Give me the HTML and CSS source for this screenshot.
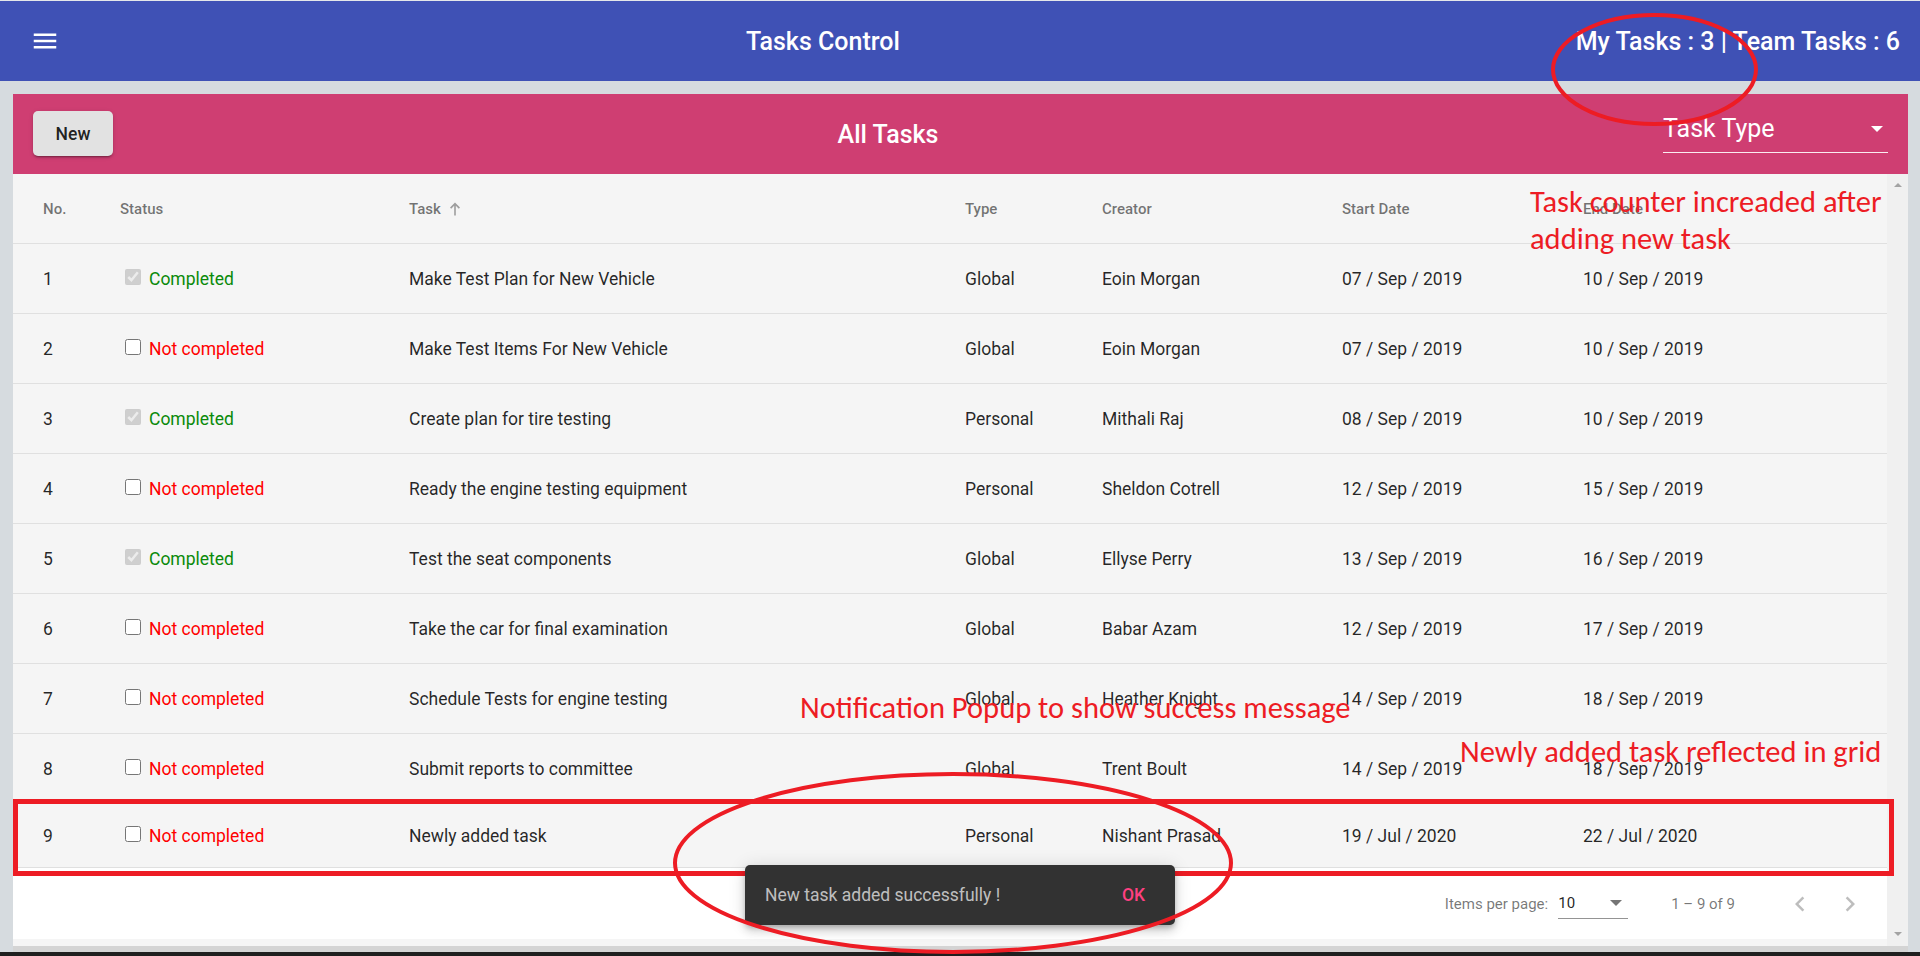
FILE: index.html
```html
<!DOCTYPE html>
<html lang="en">
<head>
<meta charset="utf-8">
<title>Tasks Control</title>
<link rel="stylesheet" href="styles.css">
</head>
<body>
<div class="page">
  <header class="app-bar">
    <span class="menu-btn">
      <svg viewBox="0 0 24 24"><path d="M3 18h18v-2H3v2zm0-5h18v-2H3v2zm0-7v2h18V6H3z"/></svg>
    </span>
    <span class="spacer"></span>
    <span class="app-title">Tasks Control</span>
    <span class="spacer"></span>
    <span class="counter">My Tasks : 3 | Team Tasks : 6</span>
  </header>

  <main class="content">
    <section class="card">
      <div class="card-bar">
        <button class="new-btn">New</button>
        <span class="spacer"></span>
        <span class="card-title">All Tasks</span>
        <span class="spacer"></span>
        <div class="type-select">
          <span>Task Type</span>
          <span class="arrow-white"></span>
        </div>
      </div>

      <div class="scroll">
        <div class="scroll-body">
          <div class="grid head">
            <span>No.</span>
            <span>Status</span>
            <span class="sort">Task
              <svg class="sort-arrow" viewBox="0 0 12 14"><path d="M6 0.5 L1 5.5 L2.2 6.7 L5.2 3.7 L5.2 13.5 L6.8 13.5 L6.8 3.7 L9.8 6.7 L11 5.5 Z"/></svg>
            </span>
            <span>Type</span>
            <span>Creator</span>
            <span>Start Date</span>
            <span>End Date</span>
          </div>

          <div class="grid row">
            <span>1</span>
            <span><input type="checkbox" class="cb" checked disabled><span class="done">Completed</span></span>
            <span>Make Test Plan for New Vehicle</span>
            <span>Global</span>
            <span>Eoin Morgan</span>
            <span>07 / Sep / 2019</span>
            <span>10 / Sep / 2019</span>
          </div>
          <div class="grid row">
            <span>2</span>
            <span><input type="checkbox" class="cb"><span class="todo">Not completed</span></span>
            <span>Make Test Items For New Vehicle</span>
            <span>Global</span>
            <span>Eoin Morgan</span>
            <span>07 / Sep / 2019</span>
            <span>10 / Sep / 2019</span>
          </div>
          <div class="grid row">
            <span>3</span>
            <span><input type="checkbox" class="cb" checked disabled><span class="done">Completed</span></span>
            <span>Create plan for tire testing</span>
            <span>Personal</span>
            <span>Mithali Raj</span>
            <span>08 / Sep / 2019</span>
            <span>10 / Sep / 2019</span>
          </div>
          <div class="grid row">
            <span>4</span>
            <span><input type="checkbox" class="cb"><span class="todo">Not completed</span></span>
            <span>Ready the engine testing equipment</span>
            <span>Personal</span>
            <span>Sheldon Cotrell</span>
            <span>12 / Sep / 2019</span>
            <span>15 / Sep / 2019</span>
          </div>
          <div class="grid row">
            <span>5</span>
            <span><input type="checkbox" class="cb" checked disabled><span class="done">Completed</span></span>
            <span>Test the seat components</span>
            <span>Global</span>
            <span>Ellyse Perry</span>
            <span>13 / Sep / 2019</span>
            <span>16 / Sep / 2019</span>
          </div>
          <div class="grid row">
            <span>6</span>
            <span><input type="checkbox" class="cb"><span class="todo">Not completed</span></span>
            <span>Take the car for final examination</span>
            <span>Global</span>
            <span>Babar Azam</span>
            <span>12 / Sep / 2019</span>
            <span>17 / Sep / 2019</span>
          </div>
          <div class="grid row">
            <span>7</span>
            <span><input type="checkbox" class="cb"><span class="todo">Not completed</span></span>
            <span>Schedule Tests for engine testing</span>
            <span>Global</span>
            <span>Heather Knight</span>
            <span>14 / Sep / 2019</span>
            <span>18 / Sep / 2019</span>
          </div>
          <div class="grid row">
            <span>8</span>
            <span><input type="checkbox" class="cb"><span class="todo">Not completed</span></span>
            <span>Submit reports to committee</span>
            <span>Global</span>
            <span>Trent Boult</span>
            <span>14 / Sep / 2019</span>
            <span>18 / Sep / 2019</span>
          </div>
          <div class="grid row last">
            <span>9</span>
            <span><input type="checkbox" class="cb"><span class="todo">Not completed</span></span>
            <span>Newly added task</span>
            <span>Personal</span>
            <span>Nishant Prasad</span>
            <span>19 / Jul / 2020</span>
            <span>22 / Jul / 2020</span>
          </div>

          <div class="paginator">
            <span class="pg-label">Items per page:</span>
            <div class="pg-select">
              <span>10</span>
              <span class="arrow-dark"></span>
            </div>
            <span class="pg-range">1 – 9 of 9</span>
            <span class="pg-btn">
              <svg viewBox="0 0 24 24"><path d="M15.41 7.41L14 6l-6 6 6 6 1.41-1.41L10.83 12z"/></svg>
            </span>
            <span class="pg-btn">
              <svg viewBox="0 0 24 24"><path d="M10 6L8.59 7.41 13.17 12l-4.58 4.59L10 18l6-6z"/></svg>
            </span>
          </div>
          <div class="hstrip"></div>
        </div>
        <div class="vscroll">
          <span class="sb-up"></span>
          <span class="sb-down"></span>
        </div>
      </div>
      <div class="hbar"></div>
    </section>
  </main>
  <div class="taskbar"></div>
</div>

<svg class="annot-low" viewBox="0 0 1920 956" width="1920" height="956">
  <rect x="15.5" y="801.5" width="1876" height="72" fill="none" stroke="#ed1c24" stroke-width="5"/>
</svg>

<div class="snackbar">
  <span class="snack-text">New task added successfully !</span>
  <span class="snack-action">OK</span>
</div>

<svg class="annot-high" viewBox="0 0 1920 956" width="1920" height="956">
  <ellipse cx="1654.5" cy="69.5" rx="101.5" ry="54.5" fill="none" stroke="#ed1c24" stroke-width="4"/>
  <ellipse cx="953" cy="863" rx="278" ry="89" fill="none" stroke="#ed1c24" stroke-width="4"/>
</svg>

<div class="note note-counter">Task counter increaded after<br>adding new task</div>
<div class="note note-popup">Notification Popup to show success message</div>
<div class="note note-grid">Newly added task reflected in grid</div>
</body>
</html>
```

FILE: styles.css
```css
* {
  box-sizing: border-box;
}

html,
body {
  margin: 0;
  padding: 0;
}

body {
  position: relative;
  width: 1920px;
  height: 956px;
  overflow: hidden;
  background: #d6dbdf;
  font-family: Roboto, "Noto Sans", sans-serif;
}

.page {
  height: 956px;
  display: flex;
  flex-direction: column;
  border-top: 1px solid #e4e7ea;
}

/* ---------- top app bar ---------- */
.app-bar {
  flex: none;
  height: 80px;
  background: #3f51b5;
  color: #fff;
  display: flex;
  align-items: center;
  padding: 0 20px;
}

.menu-btn {
  width: 50px;
  height: 50px;
  display: flex;
  align-items: center;
  justify-content: center;
}

.menu-btn svg {
  width: 30px;
  height: 30px;
  fill: #fff;
}

.spacer {
  flex: 1;
}

.app-title,
.counter,
.card-title {
  font-size: 25px;
  font-weight: 500;
  white-space: nowrap;
}

/* ---------- content card ---------- */
.content {
  flex: 1;
  min-height: 0;
  display: flex;
  padding: 13px 12px 0 13px;
}

.card {
  flex: 1;
  display: flex;
  flex-direction: column;
  min-width: 0;
}

.card-bar {
  flex: none;
  height: 80px;
  background: #cf3e72;
  color: #fff;
  display: flex;
  align-items: center;
  padding: 0 20px;
}

.new-btn {
  height: 45px;
  min-width: 80px;
  padding: 0 20px;
  border: 0;
  border-radius: 5px;
  background: #e2e2e2;
  color: rgba(0, 0, 0, 0.87);
  font-family: Roboto, sans-serif;
  font-size: 17.5px;
  font-weight: 500;
  box-shadow: 0 3px 1px -2px rgba(0, 0, 0, 0.2), 0 2px 2px 0 rgba(0, 0, 0, 0.14), 0 1px 5px 0 rgba(0, 0, 0, 0.12);
  margin-top: -1px;
}

.type-select {
  width: 225px;
  height: 38px;
  padding-bottom: 10px;
  border-bottom: 1px solid rgba(255, 255, 255, 0.9);
  display: flex;
  align-items: center;
  justify-content: space-between;
  font-size: 25px;
  line-height: 26px;
  font-weight: 400;
  padding-right: 5px;
}

.arrow-white {
  width: 0;
  height: 0;
  border-left: 6px solid transparent;
  border-right: 6px solid transparent;
  border-top: 6px solid #fff;
}

/* ---------- scroll area ---------- */
.scroll {
  flex: 1;
  min-height: 0;
  display: flex;
}

.scroll-body {
  flex: 1;
  display: flex;
  flex-direction: column;
  background: #f5f5f5;
  min-width: 0;
}

.vscroll {
  width: 21px;
  flex: none;
  background: #f0f0f0;
  display: flex;
  flex-direction: column;
  align-items: center;
  justify-content: space-between;
  padding: 9px 0 10px;
}

.sb-up {
  width: 0;
  height: 0;
  border-left: 4px solid transparent;
  border-right: 4px solid transparent;
  border-bottom: 4px solid #a3a3a3;
}

.sb-down {
  width: 0;
  height: 0;
  border-left: 4px solid transparent;
  border-right: 4px solid transparent;
  border-top: 4px solid #a3a3a3;
}

.hstrip {
  height: 7px;
  flex: none;
  background: #f5f5f5;
}

.hbar {
  height: 6px;
  flex: none;
  background: #d4d4d4;
}

.taskbar {
  height: 4px;
  flex: none;
  background: #1f1f1f;
}

/* ---------- table ---------- */
.grid {
  flex: none;
  display: grid;
  grid-template-columns: 77px 289px 556px 137px 240px 241px 1fr;
  align-items: center;
  padding-left: 30px;
  border-bottom: 1px solid #e0e0e0;
  white-space: nowrap;
}

.head {
  height: 70px;
  font-size: 15px;
  font-weight: 500;
  color: rgba(0, 0, 0, 0.54);
}

.sort {
  display: flex;
  align-items: center;
}

.sort-arrow {
  width: 12px;
  height: 14px;
  margin-left: 8px;
  fill: #9e9e9e;
}

.row {
  height: 70px;
  font-size: 17.5px;
  color: rgba(0, 0, 0, 0.85);
}

.row.last {
  height: 64px;
}

.cb {
  width: 16px;
  height: 16px;
  margin: 0 8px 0 5px;
  vertical-align: 0;
}

.done {
  color: #0a8a0a;
}

.todo {
  color: #ff0000;
}

/* ---------- paginator ---------- */
.paginator {
  flex: none;
  height: 71px;
  background: #fff;
  display: flex;
  align-items: center;
  justify-content: flex-end;
  padding-right: 12px;
  font-size: 15px;
  color: rgba(0, 0, 0, 0.54);
}

.pg-select {
  width: 70px;
  height: 30px;
  margin-left: 10px;
  border-bottom: 1px solid rgba(0, 0, 0, 0.42);
  display: flex;
  align-items: center;
  justify-content: space-between;
  padding-right: 6px;
  color: rgba(0, 0, 0, 0.87);
}

.arrow-dark {
  width: 0;
  height: 0;
  border-left: 6px solid transparent;
  border-right: 6px solid transparent;
  border-top: 6px solid rgba(0, 0, 0, 0.54);
}

.pg-range {
  margin: 0 40px 0 43px;
}

.pg-btn {
  width: 50px;
  height: 50px;
  display: flex;
  align-items: center;
  justify-content: center;
}

.pg-btn svg {
  width: 30px;
  height: 30px;
  fill: rgba(0, 0, 0, 0.26);
}

/* ---------- snackbar ---------- */
.snackbar {
  position: absolute;
  left: 745px;
  top: 865px;
  width: 430px;
  height: 60px;
  z-index: 2;
  background: #323232;
  border-radius: 5px;
  display: flex;
  align-items: center;
  justify-content: space-between;
  padding: 0 30px 0 20px;
  font-size: 17.5px;
  box-shadow: 0 3px 5px -1px rgba(0, 0, 0, 0.2), 0 6px 10px 0 rgba(0, 0, 0, 0.14), 0 1px 18px 0 rgba(0, 0, 0, 0.12);
}

.snack-text {
  color: rgba(255, 255, 255, 0.7);
}

.snack-action {
  color: #ff4081;
  font-weight: 500;
}

/* ---------- annotations ---------- */
.annot-low,
.annot-high {
  position: absolute;
  left: 0;
  top: 0;
  pointer-events: none;
}

.annot-low {
  z-index: 1;
}

.annot-high {
  z-index: 3;
}

.note {
  position: absolute;
  z-index: 4;
  color: #ed1c24;
  font-family: Carlito, Calibri, "Open Sans", sans-serif;
  font-size: 30.5px;
  line-height: 37px;
  white-space: nowrap;
}

.note-counter {
  left: 1530px;
  top: 183px;
}

.note-popup {
  left: 800px;
  top: 689px;
}

.note-grid {
  left: 1460px;
  top: 733px;
}
```
